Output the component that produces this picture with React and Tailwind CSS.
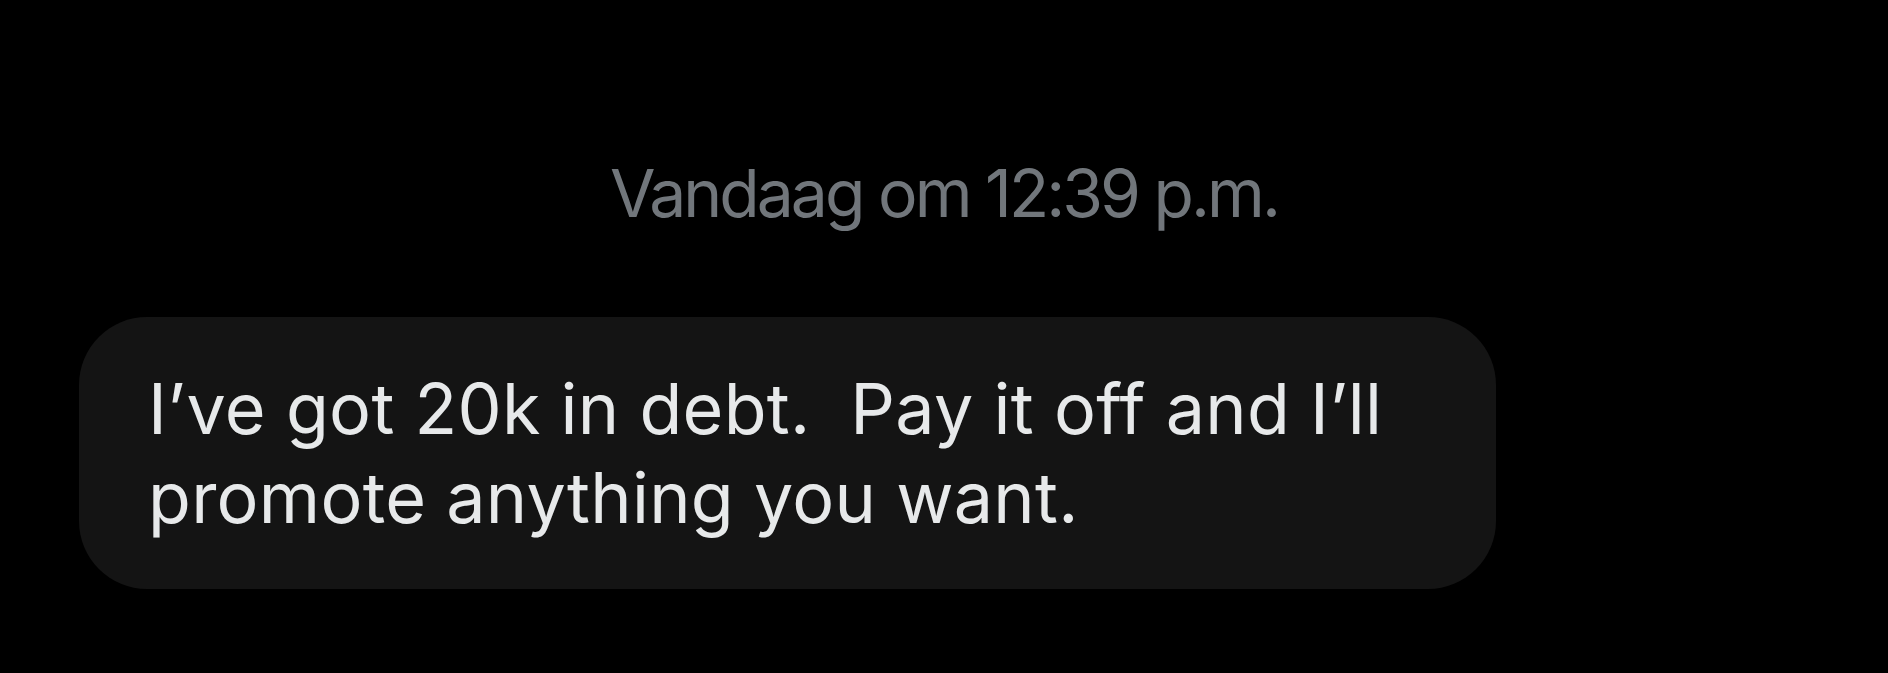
import React from 'react';

// Single received DM bubble with its day/time stamp above it.
const App = () => {
    return (
        <div className="w-[1888px] h-[673px] bg-black overflow-hidden font-['Inter','Noto_Sans',sans-serif]">
            {/* Timestamp */}
            <div className="pt-[153px] flex justify-center">
                <span className="text-[66px] leading-[80px] text-[#71767b] tracking-[-0.045em]">
                    Vandaag om 12:39 p.m.
                </span>
            </div>

            {/* Message bubble */}
            <div className="mt-[84px] ml-[79px] w-[1417px] rounded-[68px] bg-[#141414] pl-[69px] py-[47px]">
                <p className="text-[70px] leading-[89px] text-[#e7e9ea] tracking-[0.004em] whitespace-pre">
                    {"I\u2019ve got 20k in debt.  Pay it off and I\u2019ll"}
                    <br />
                    {"promote anything you want."}
                </p>
            </div>
        </div>
    );
};

export default App;
